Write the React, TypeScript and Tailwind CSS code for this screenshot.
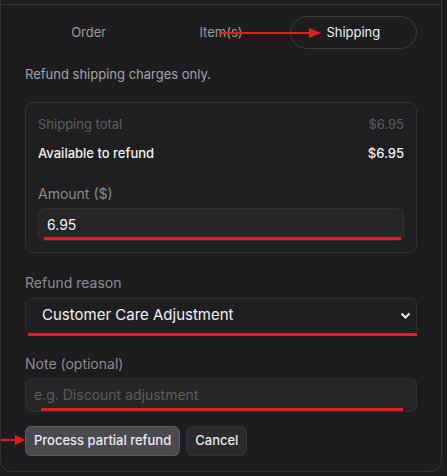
import React, { useState } from 'react';

const tabs = ['Order', 'Item(s)', 'Shipping'];

const App: React.FC = () => {
  const [tab, setTab] = useState('Shipping');
  const [amount, setAmount] = useState('6.95');
  const [note, setNote] = useState('');

  return (
    <div className="min-h-[476px] w-[447px] bg-[#1c1c1e] font-['Inter','Noto_Sans',sans-serif] text-[#e6e6e8]">
      <div className="relative w-[442px] rounded-b-xl border-x border-b border-[#333336] bg-[#1d1d1f] pb-[15px]">
        <div className="h-[5px] border-b border-[#333336]" />

        {/* tabs */}
        <div className="mt-[11px] grid grid-cols-3 gap-[5px] px-6">
          {tabs.map((t) => (
            <button
              key={t}
              onClick={() => setTab(t)}
              className={
                t === tab
                  ? 'h-[33px] rounded-full border border-[#3a3a3d] text-[13px] text-[#f0f0f2]'
                  : 'h-[33px] rounded-full border border-transparent text-[13px] text-[#9a9a9f]'
              }
            >
              {t}
            </button>
          ))}
        </div>

        <p className="mt-[16px] px-6 text-[13px] text-[#a3a3a8]">Refund shipping charges only.</p>

        <div className="px-6">
          <div className="mt-[17px] rounded-lg border border-[#303033] bg-[#1f1f21] px-[12px] pb-[11px] pt-[12px]">
            <div className="flex justify-between text-[13px] text-[#5d5d62]">
              <span>Shipping total</span>
              <span>$6.95</span>
            </div>
            <div className="mt-[10px] flex justify-between text-[13px] font-medium text-[#f2f2f4]">
              <span>Available to refund</span>
              <span>$6.95</span>
            </div>
            <label className="mt-[19px] block text-[14px] text-[#8c8c91]">Amount ($)</label>
            <input
              value={amount}
              onChange={(e) => setAmount(e.target.value)}
              className="mt-[4px] h-[33px] w-full rounded-md border border-[#2f2f32] bg-[#262628] px-[8px] text-[14px] text-[#f0f0f2] outline-none"
            />
          </div>

          <label className="mt-[19px] block text-[14px] text-[#8c8c91]">Refund reason</label>
          <div className="relative mt-[5px]">
            <select className="h-[36px] w-full appearance-none rounded-md border border-[#2f2f32] bg-[#1f1f21] px-[16px] text-[15px] text-[#f2f2f4] outline-none">
              <option>Customer Care Adjustment</option>
              <option>Shipping Delay</option>
              <option>Damaged Item</option>
            </select>
            <svg
              className="pointer-events-none absolute right-[6px] top-[14px]"
              width="11"
              height="8"
              viewBox="0 0 11 8"
              fill="none"
            >
              <path d="M1.5 1.5 L5.5 5.5 L9.5 1.5" stroke="#f2f2f4" strokeWidth="2" />
            </svg>
          </div>

          <label className="mt-[19px] block text-[14px] text-[#8c8c91]">Note (optional)</label>
          <input
            value={note}
            onChange={(e) => setNote(e.target.value)}
            placeholder="e.g. Discount adjustment"
            className="mt-[4px] h-[34px] w-full rounded-md border border-[#2f2f32] bg-[#262628] px-[8px] text-[14px] text-[#f0f0f2] placeholder-[#5c5c61] outline-none"
          />

          <div className="mt-[14px] flex gap-[6px]">
            <button className="h-[30px] rounded-md border border-[#5a5a60] bg-[#4a4a50] px-[8px] text-[13px] font-medium text-[#ececee]">
              Process partial refund
            </button>
            <button className="h-[30px] rounded-md border border-[#333336] bg-[#2b2b2e] px-[8px] text-[13px] font-medium text-[#ececee]">
              Cancel
            </button>
          </div>
        </div>

        {/* red annotation marks */}
        <div className="pointer-events-none absolute left-[218px] top-[32px] h-[2px] w-[92px] bg-[#e51c1c]" />
        <div className="pointer-events-none absolute left-[308px] top-[28px] h-0 w-0 border-y-[5px] border-l-[12px] border-y-transparent border-l-[#e51c1c]" />
        <div className="pointer-events-none absolute left-[43px] top-[237px] h-[3px] w-[357px] bg-[#e51c1c]" />
        <div className="pointer-events-none absolute left-[27px] top-[333px] h-[3px] w-[389px] bg-[#e51c1c]" />
        <div className="pointer-events-none absolute left-[40px] top-[408px] h-[3px] w-[362px] bg-[#e51c1c]" />
        <div className="pointer-events-none absolute left-0 top-[439px] h-[2px] w-[16px] bg-[#e51c1c]" />
        <div className="pointer-events-none absolute left-[14px] top-[435px] h-0 w-0 border-y-[5px] border-l-[11px] border-y-transparent border-l-[#e51c1c]" />
      </div>
    </div>
  );
};

export default App;
